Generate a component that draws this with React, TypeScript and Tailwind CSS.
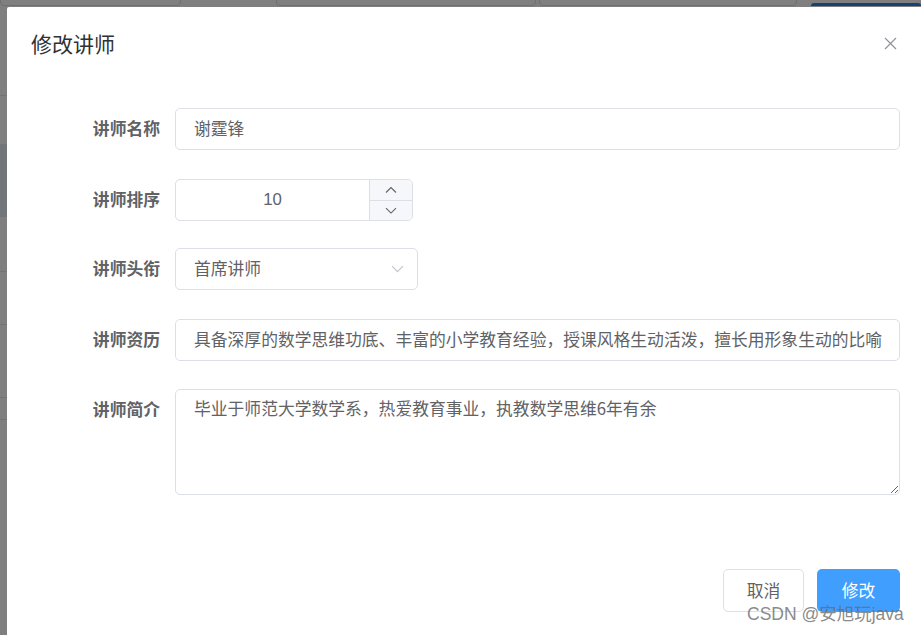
import React from "react";

const font = { fontFamily: '"Microsoft YaHei", "Noto Sans CJK SC", "Noto Sans", sans-serif' };

function Label({ children }: { children: React.ReactNode }) {
  return (
    <div className="flex h-[42px] w-[168px] shrink-0 items-center justify-end pr-[15px] text-[16.8px] font-bold text-[#606266]">
      {children}
    </div>
  );
}

function ChevronUp() {
  return (
    <svg width="12" height="8" viewBox="0 0 12 8" fill="none" stroke="#606266" strokeWidth="1.1">
      <path d="M1 6.5 L6 1.5 L11 6.5" />
    </svg>
  );
}

function ChevronDown({ color = "#606266", w = 12 }: { color?: string; w?: number }) {
  return (
    <svg width={w} height={w * 0.6} viewBox="0 0 12 7" fill="none" stroke={color} strokeWidth="1.1">
      <path d="M1 1 L6 6 L11 1" />
    </svg>
  );
}

export default function App() {
  return (
    <div className="relative h-[635px] w-[921px] overflow-hidden bg-white" style={font}>
      {/* page behind the mask */}
      <div className="-mt-[30px] flex h-[36px] items-stretch">
        <div className="w-[181px] rounded-[4px] border border-[#dcdfe6]" />
        <div className="ml-[95px] w-[260px] rounded-[4px] border border-[#dcdfe6]" />
        <div className="ml-[3px] w-[258px] rounded-[4px] border border-[#dcdfe6]" />
        <div className="ml-[14px] mt-[33px] flex-1 rounded-t-[4px] bg-[#2a83e8]" />
      </div>
      <div className="flex flex-col">
        <div className="h-[90px] border-b border-[#e6e6e6]" />
        <div className="h-[48px]" />
        <div className="h-[73px] bg-[#e4eaf4]" />
        <div className="h-[55px] border-b border-[#e6e6e6]" />
        <div className="h-[53px] border-b border-[#e6e6e6]" />
        <div className="h-[73px] border-b border-[#e6e6e6]" />
        <div className="h-[22px] border-b border-[#e6e6e6]" />
      </div>

      {/* mask */}
      <div className="absolute inset-0 bg-black/50" />

      {/* dialog */}
      <div className="absolute left-[7px] top-[7px] h-[700px] w-[960px] rounded-[2px] bg-white">
        <div className="w-[893px]">
          <div className="flex items-center justify-between pl-[24px] pr-[3px] pt-[24px]">
            <span className="text-[21px] leading-[24px] text-[#303133]">修改讲师</span>
            <svg width="13" height="13" viewBox="0 0 13 13" stroke="#909399" strokeWidth="1.2">
              <path d="M1 1 L12 12 M12 1 L1 12" />
            </svg>
          </div>

          <div className="mt-[53px] flex flex-col">
            <div className="mb-[29px] flex items-center">
              <Label>讲师名称</Label>
              <div className="flex h-[42px] flex-1 items-center rounded-[5px] border border-[#dcdfe6] pl-[18px] text-[16.8px] text-[#606266]">
                谢霆锋
              </div>
            </div>

            <div className="mb-[27px] flex items-center">
              <Label>讲师排序</Label>
              <div className="flex h-[42px] w-[238px] overflow-hidden rounded-[5px] border border-[#dcdfe6]">
                <div className="flex flex-1 items-center justify-center text-[16.8px] text-[#606266]" style={{ fontFamily: '"Liberation Sans", Arial, sans-serif' }}>
                  10
                </div>
                <div className="flex w-[43px] flex-col border-l border-[#dcdfe6] bg-[#f5f7fa]">
                  <div className="flex flex-1 items-center justify-center border-b border-[#dcdfe6]">
                    <ChevronUp />
                  </div>
                  <div className="flex flex-1 items-center justify-center">
                    <ChevronDown />
                  </div>
                </div>
              </div>
            </div>

            <div className="mb-[29px] flex items-center">
              <Label>讲师头衔</Label>
              <div className="flex h-[42px] w-[243px] items-center justify-between rounded-[5px] border border-[#dcdfe6] pl-[18px] pr-[13px] text-[16.8px] text-[#606266]">
                <span>首席讲师</span>
                <ChevronDown color="#c0c4cc" w={13} />
              </div>
            </div>

            <div className="mb-[28px] flex items-center">
              <Label>讲师资历</Label>
              <div className="flex h-[42px] min-w-0 flex-1 items-center rounded-[5px] border border-[#dcdfe6] pl-[18px] pr-[17px] text-[16.8px] text-[#606266]">
                <span className="overflow-hidden whitespace-nowrap">
                  具备深厚的数学思维功底、丰富的小学教育经验，授课风格生动活泼，擅长用形象生动的比喻来讲解抽象的数学问题
                </span>
              </div>
            </div>

            <div className="flex items-start">
              <Label>讲师简介</Label>
              <textarea
                readOnly
                defaultValue="毕业于师范大学数学系，热爱教育事业，执教数学思维6年有余"
                className="h-[106px] flex-1 resize-y rounded-[5px] border border-[#dcdfe6] px-[18px] py-[6px] text-[16.8px] leading-[1.5] text-[#606266] outline-none"
                style={font}
              />
            </div>
          </div>

          <div className="mt-[74px] flex justify-end gap-[13px]">
            <button className="h-[43px] w-[81px] rounded-[5px] border border-[#dcdfe6] bg-white text-[16.8px] text-[#606266]">
              取消
            </button>
            <button className="h-[43px] w-[83px] rounded-[5px] bg-[#409eff] text-[16.8px] text-white">
              修改
            </button>
          </div>
        </div>
      </div>

      {/* watermark */}
      <div
        className="absolute left-[747px] top-[603px] text-[17.5px] leading-[22px] text-[#6b6b6b]/80"
        style={{ fontFamily: '"Liberation Sans", "Noto Sans CJK SC", sans-serif' }}
      >
        CSDN @安旭玩java
      </div>
    </div>
  );
}
